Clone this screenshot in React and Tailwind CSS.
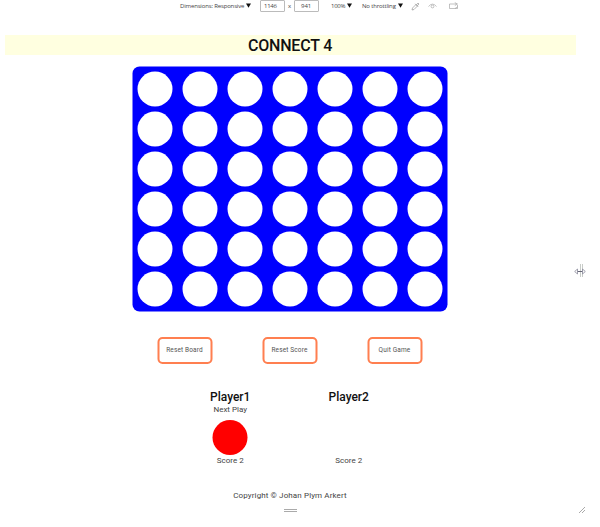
const cells = Array.from({ length: 42 }, (_, i) => i);

function Caret() {
  return (
    <svg className="mb-px ml-[2px] h-[5px] w-[5px] shrink-0" viewBox="0 0 5 5">
      <path d="M0 0.5h5L2.5 4.8z" fill="#111" />
    </svg>
  );
}

function Toolbar() {
  return (
    <div className="flex h-3 w-full items-center pl-[180px] font-['Open_Sans',sans-serif] text-[6px] leading-[12px] whitespace-nowrap text-[#444]">
      <div className="flex w-[80px] items-center">
        <span className="w-[64px] tracking-[-0.16px]">Dimensions: Responsive</span>
        <Caret />
      </div>
      <div className="h-[12px] w-[25px] rounded-[1px] border border-[#bbb] pl-[3px] leading-[10px] tracking-[-0.3px]">1146</div>
      <span className="w-[9px] text-center">x</span>
      <div className="h-[12px] w-[25px] rounded-[1px] border border-[#bbb] pl-[6px] leading-[10px]">941</div>
      <div className="ml-[12px] flex w-[31px] items-center">
        <span className="w-[14px] tracking-[-0.3px]">100%</span>
        <Caret />
      </div>
      <div className="flex w-[49px] items-center">
        <span className="w-[34px] tracking-[-0.16px]">No throttling</span>
        <Caret />
      </div>
      <svg className="h-[9px] w-[9px]" viewBox="0 0 9 9" fill="none" stroke="#888" strokeWidth="0.6">
        <path d="M1 8l.5-2L5 2.5 6.5 4 3 7.5zM4.2 1.8l3 3M5.5 2.7L7 1l1 1-1.6 1.7" />
      </svg>
      <svg className="ml-[8px] h-[8px] w-[9px]" viewBox="0 0 9 8" fill="none" stroke="#999" strokeWidth="0.6">
        <path d="M.5 4.5Q4.5-.3 8.5 4.5" />
        <circle cx="4.5" cy="4.5" r="1.4" />
      </svg>
      <svg className="ml-[12px] h-[8px] w-[10px]" viewBox="0 0 10 8" fill="none" stroke="#999" strokeWidth="0.6">
        <path d="M5 2H.5v4.5h5.5L8.5 4.8M5 2h2.5M5.8.6L8.5 2 5.8 3.6M8.5 3v3.5H6" />
      </svg>
    </div>
  );
}

function GameButton({ children }) {
  return (
    <button className="h-[27px] w-[55px] rounded-[5px] border-2 border-[#ff7f50] bg-white text-[6.5px] leading-[23px] tracking-[0.15px] whitespace-nowrap text-[#555]">
      {children}
    </button>
  );
}

function Player({ name, active }) {
  return (
    <div className="flex w-[60px] flex-col items-center whitespace-nowrap">
      <h2 className="h-[13px] text-[12px] leading-[13px] font-medium text-[#111]">{name}</h2>
      <p className="h-[12px] text-[8px] leading-[12px]">{active ? "Next Play" : ""}</p>
      <div className={active ? "mt-[4px] size-[35px] rounded-full bg-[#f00]" : "mt-[4px] size-[35px]"} />
      <p className="h-[10px] text-[8px] leading-[11px]">Score 2</p>
    </div>
  );
}

export default function App() {
  return (
    <div className="relative flex h-[527px] w-[600px] flex-col overflow-hidden bg-white font-['Roboto',sans-serif] text-[#444]">
      <Toolbar />
      <main className="ml-[4.5px] flex w-[571px] flex-col items-center">
        <h1 className="mt-[23px] h-5 w-full bg-[#ffffe0] text-center text-[16px] leading-[21px] font-medium tracking-[-0.2px] text-[#111]">CONNECT 4</h1>
        <div className="mt-[11px] grid h-[245px] w-[315px] -translate-x-[0.5px] translate-y-[0.5px] grid-cols-[repeat(7,45px)] grid-rows-[repeat(6,40px)] place-items-center rounded-[7px] bg-[#00f] py-[2px]">
          {cells.map((i) => (
            <div key={i} className="size-[35px] rounded-full bg-white" />
          ))}
        </div>
        <div className="mt-[26px] flex -translate-x-[0.5px] gap-[50px]">
          <GameButton>Reset Board</GameButton>
          <GameButton>Reset Score</GameButton>
          <GameButton>Quit Game</GameButton>
        </div>
        <div className="mt-[27px] flex -translate-x-[0.5px] gap-[58.5px]">
          <Player name="Player1" active />
          <Player name="Player2" />
        </div>
        <footer className="mt-[25px] text-[8px] leading-[11px] tracking-[0.12px]">Copyright © Johan Plym Arkert</footer>
        <div className="mt-[8px] h-[3px] w-[13px] border-y border-[#aaa]" />
      </main>
      <svg className="absolute top-[264px] left-[574px] h-[14px] w-[12px]" viewBox="0 0 12 14" fill="none">
        <path d="M6.5 0v13M8.5 0v13" stroke="#c8ccc8" />
        <path d="M2 7.5h8" stroke="#667" />
        <path d="M3.5 5L.7 7.5 3.5 10zM8.5 5l2.8 2.5L8.5 10z" fill="#fff" stroke="#889" strokeWidth="0.8" />
      </svg>
      <svg className="absolute top-[506px] left-[578px] h-[8px] w-[8px]" viewBox="0 0 8 8" stroke="#aaa">
        <path d="M1 7l6-6M4 7l3-3" />
      </svg>
    </div>
  );
}
